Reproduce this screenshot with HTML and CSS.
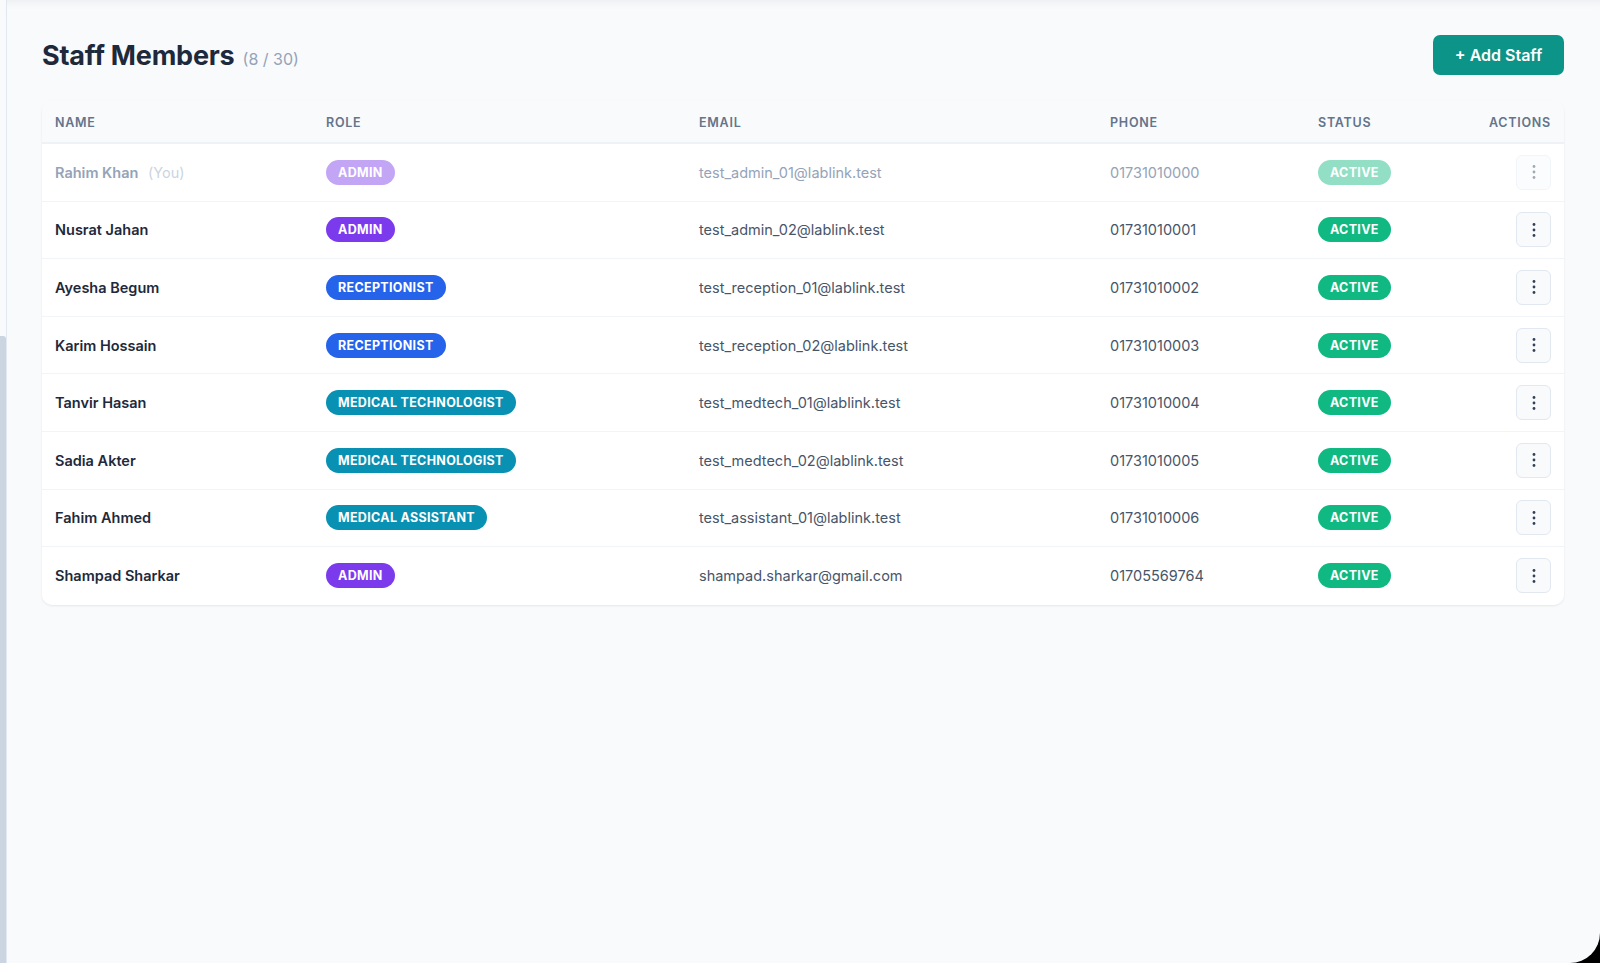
FILE: index.html
```html
<!DOCTYPE html>
<html lang="en">
<head>
<meta charset="utf-8">
<title>Staff Members</title>
<link rel="stylesheet" href="styles.css">
</head>
<body>
<div class="app">
  <aside class="rail"><div class="rail-space"></div><div class="rail-thumb"></div></aside>
  <main class="main">
    <header class="page-head">
      <h1 class="title">Staff Members <span class="count">(8 / 30)</span></h1>
      <button class="add-btn">+ Add Staff</button>
    </header>
    <section class="card">
      <table class="staff">
        <colgroup>
          <col class="c-name"><col class="c-role"><col class="c-email"><col class="c-phone"><col class="c-status"><col class="c-actions">
        </colgroup>
        <thead>
          <tr><th>Name</th><th>Role</th><th>Email</th><th>Phone</th><th>Status</th><th class="right">Actions</th></tr>
        </thead>
        <tbody>
          <tr class="self">
            <td class="name">Rahim Khan <span class="you">(You)</span></td>
            <td><span class="badge admin">Admin</span></td>
            <td class="muted">test_admin_01@lablink.test</td>
            <td class="muted">01731010000</td>
            <td><span class="badge active">Active</span></td>
            <td class="right"><button class="kebab"><svg viewBox="0 0 16 16" width="16" height="16"><circle cx="8" cy="2.5" r="1.4"/><circle cx="8" cy="8" r="1.4"/><circle cx="8" cy="13.5" r="1.4"/></svg></button></td>
          </tr>
          <tr>
            <td class="name">Nusrat Jahan</td>
            <td><span class="badge admin">Admin</span></td>
            <td class="muted">test_admin_02@lablink.test</td>
            <td class="muted">01731010001</td>
            <td><span class="badge active">Active</span></td>
            <td class="right"><button class="kebab"><svg viewBox="0 0 16 16" width="16" height="16"><circle cx="8" cy="2.5" r="1.4"/><circle cx="8" cy="8" r="1.4"/><circle cx="8" cy="13.5" r="1.4"/></svg></button></td>
          </tr>
          <tr>
            <td class="name">Ayesha Begum</td>
            <td><span class="badge recep">Receptionist</span></td>
            <td class="muted">test_reception_01@lablink.test</td>
            <td class="muted">01731010002</td>
            <td><span class="badge active">Active</span></td>
            <td class="right"><button class="kebab"><svg viewBox="0 0 16 16" width="16" height="16"><circle cx="8" cy="2.5" r="1.4"/><circle cx="8" cy="8" r="1.4"/><circle cx="8" cy="13.5" r="1.4"/></svg></button></td>
          </tr>
          <tr>
            <td class="name">Karim Hossain</td>
            <td><span class="badge recep">Receptionist</span></td>
            <td class="muted">test_reception_02@lablink.test</td>
            <td class="muted">01731010003</td>
            <td><span class="badge active">Active</span></td>
            <td class="right"><button class="kebab"><svg viewBox="0 0 16 16" width="16" height="16"><circle cx="8" cy="2.5" r="1.4"/><circle cx="8" cy="8" r="1.4"/><circle cx="8" cy="13.5" r="1.4"/></svg></button></td>
          </tr>
          <tr>
            <td class="name">Tanvir Hasan</td>
            <td><span class="badge med">Medical Technologist</span></td>
            <td class="muted">test_medtech_01@lablink.test</td>
            <td class="muted">01731010004</td>
            <td><span class="badge active">Active</span></td>
            <td class="right"><button class="kebab"><svg viewBox="0 0 16 16" width="16" height="16"><circle cx="8" cy="2.5" r="1.4"/><circle cx="8" cy="8" r="1.4"/><circle cx="8" cy="13.5" r="1.4"/></svg></button></td>
          </tr>
          <tr>
            <td class="name">Sadia Akter</td>
            <td><span class="badge med">Medical Technologist</span></td>
            <td class="muted">test_medtech_02@lablink.test</td>
            <td class="muted">01731010005</td>
            <td><span class="badge active">Active</span></td>
            <td class="right"><button class="kebab"><svg viewBox="0 0 16 16" width="16" height="16"><circle cx="8" cy="2.5" r="1.4"/><circle cx="8" cy="8" r="1.4"/><circle cx="8" cy="13.5" r="1.4"/></svg></button></td>
          </tr>
          <tr>
            <td class="name">Fahim Ahmed</td>
            <td><span class="badge med">Medical Assistant</span></td>
            <td class="muted">test_assistant_01@lablink.test</td>
            <td class="muted">01731010006</td>
            <td><span class="badge active">Active</span></td>
            <td class="right"><button class="kebab"><svg viewBox="0 0 16 16" width="16" height="16"><circle cx="8" cy="2.5" r="1.4"/><circle cx="8" cy="8" r="1.4"/><circle cx="8" cy="13.5" r="1.4"/></svg></button></td>
          </tr>
          <tr>
            <td class="name">Shampad Sharkar</td>
            <td><span class="badge admin">Admin</span></td>
            <td class="muted">shampad.sharkar@gmail.com</td>
            <td class="muted">01705569764</td>
            <td><span class="badge active">Active</span></td>
            <td class="right"><button class="kebab"><svg viewBox="0 0 16 16" width="16" height="16"><circle cx="8" cy="2.5" r="1.4"/><circle cx="8" cy="8" r="1.4"/><circle cx="8" cy="13.5" r="1.4"/></svg></button></td>
          </tr>
        </tbody>
      </table>
    </section>
  </main>
</div>
</body>
</html>
```

FILE: styles.css
```css
* { box-sizing: border-box; }
html, body { margin: 0; padding: 0; }
body {
  background: #000;
  font-family: Inter, "Noto Sans", "Liberation Sans", sans-serif;
  color: #1e293b;
}
.app {
  display: flex;
  width: 1600px;
  height: 963px;
  background: #f8fafc;
  border-bottom-right-radius: 30px;
  overflow: hidden;
  box-shadow: inset 0 10px 10px -8px rgba(15, 23, 42, 0.06);
}
.rail {
  width: 7px;
  display: flex;
  flex-direction: column;
  border-right: 1px solid #e2e8f0;
  background: #f8fafc;
}
.rail-space { height: 336px; }
.rail-thumb {
  flex: 1;
  width: 6px;
  background: #cbd5e1;
  border-top-right-radius: 3px;
}
.main {
  flex: 1;
  padding: 35px 36px 0 35px;
}
.page-head {
  display: flex;
  align-items: center;
  justify-content: space-between;
  height: 40px;
}
.title {
  margin: 0;
  font-size: 27px;
  font-weight: 700;
  color: #1e293b;
  letter-spacing: -0.008em;
}
.count {
  font-size: 16px;
  font-weight: 400;
  color: #94a3b8;
  letter-spacing: 0;
  margin-left: 2px;
}
.add-btn {
  width: 131px;
  height: 40px;
  border: 0;
  border-radius: 7px;
  background: #0d9488;
  color: #fff;
  font-family: inherit;
  font-size: 16px;
  font-weight: 600;
}
.card {
  margin-top: 26px;
  background: #fff;
  border-radius: 10px;
  box-shadow: 0 1px 3px rgba(15, 23, 42, 0.05), 0 1px 2px rgba(15, 23, 42, 0.03);
  overflow: hidden;
}
.staff {
  width: 100%;
  border-collapse: separate;
  border-spacing: 0;
  table-layout: fixed;
}
.c-name { width: 271px; }
.c-role { width: 373px; }
.c-email { width: 411px; }
.c-phone { width: 208px; }
.c-status { width: 135px; }
.c-actions { width: auto; }
.staff th {
  height: 43px;
  padding: 1px 13px 0;
  text-align: left;
  background: #f8fafc;
  border-bottom: 2px solid #eef2f7;
  font-size: 12.5px;
  font-weight: 600;
  letter-spacing: 0.06em;
  text-transform: uppercase;
  color: #64748b;
}
.staff td {
  height: 57.6px;
  padding: 0 13px;
  border-bottom: 1px solid #f1f5f9;
  font-size: 14.5px;
  vertical-align: middle;
  white-space: nowrap;
}
.staff tbody tr:last-child td { border-bottom: 0; }
.staff .right { text-align: right; }
.name { font-weight: 600; color: #1e293b; }
.you { font-weight: 400; color: #94a3b8; margin-left: 6px; }
.muted { color: #475569; }
.self .name, .self .muted { color: #94a3b8; }
.self .you { color: #cbd5e1; }
.self .badge, .self .kebab { opacity: 0.45; }
.badge {
  display: inline-block;
  height: 25px;
  line-height: 25px;
  padding: 0 12px;
  border-radius: 13px;
  color: #fff;
  font-size: 12.5px;
  font-weight: 700;
  letter-spacing: 0.025em;
  text-transform: uppercase;
}
.admin { background: #7c3aed; }
.recep { background: #2563eb; }
.med { background: #0891b2; }
.active { background: #10b981; }
.kebab {
  width: 35px;
  height: 35px;
  padding: 0;
  border: 1px solid #e2e8f0;
  border-radius: 6px;
  background: #f8fafc;
  display: inline-flex;
  align-items: center;
  justify-content: center;
  vertical-align: middle;
}
.kebab svg { fill: #334155; }
```
